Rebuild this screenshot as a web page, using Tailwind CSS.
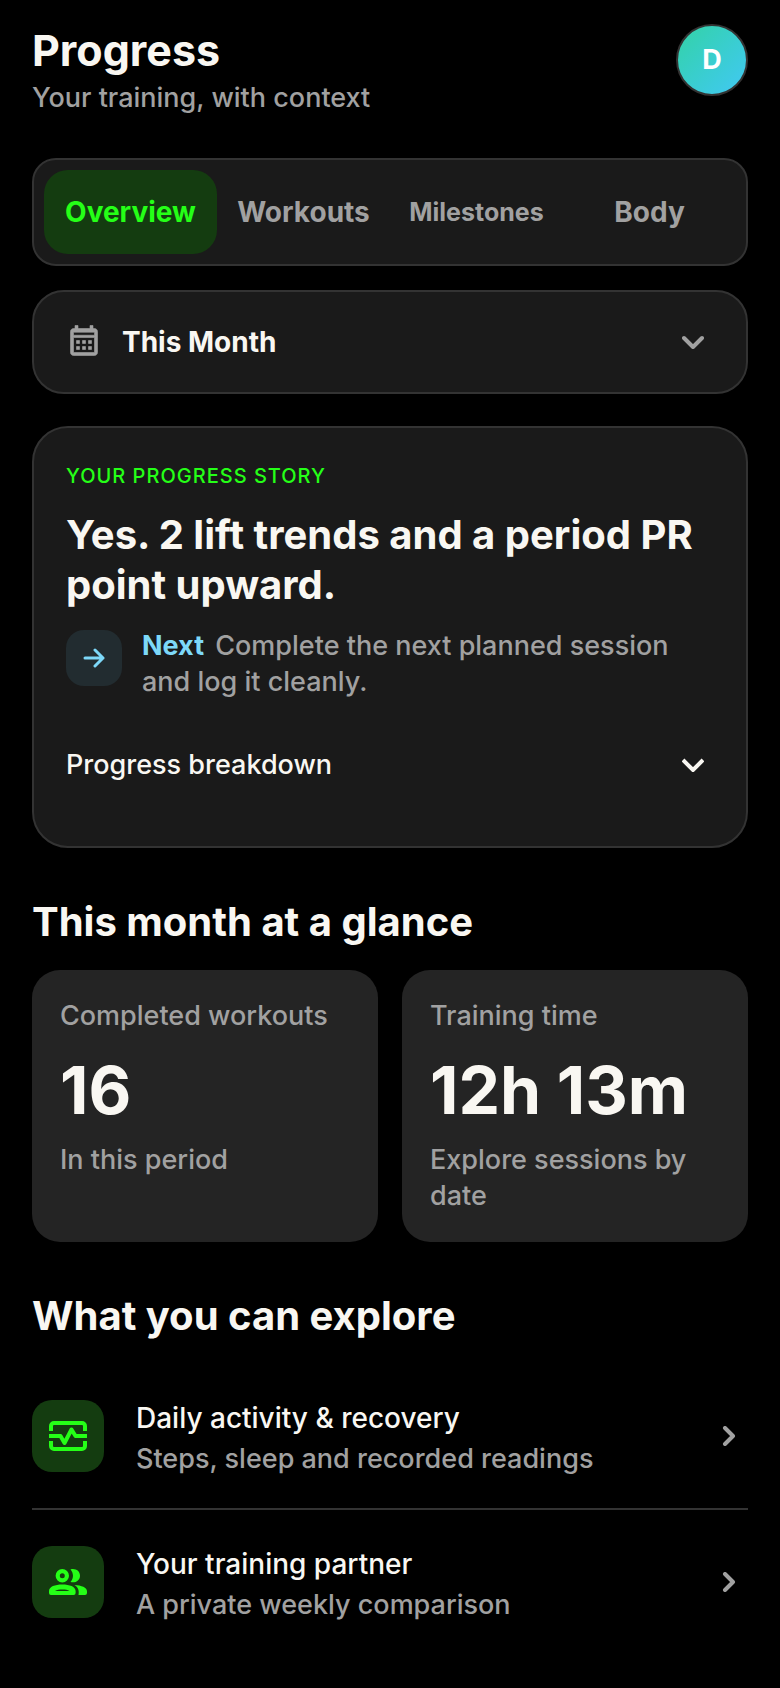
<!DOCTYPE html>
<html lang="en">
<head>
<meta charset="UTF-8">
<title>Progress</title>
<meta name="viewport" content="width=device-width,initial-scale=1">
<script src="https://cdn.jsdelivr.net/npm/@tailwindcss/browser@4"></script>
</head>

<body class="bg-black text-[#f9f7f2] font-['Inter',sans-serif] text-[27px] leading-9 font-medium">
<main class="px-8 pt-6 pb-8">

  <!-- header -->
  <header class="flex items-start justify-between mb-[42px]">
    <div>
      <h1 class="text-[43px] leading-[52px] font-bold mb-1">Progress</h1>
      <p class="text-[#a1a1a1]">Your training, with context</p>
    </div>
    <button class="size-[72px] rounded-full border-2 border-[#333] bg-linear-135 from-[#34d2a5] to-[#42c8f4] text-white font-bold" aria-label="Account">D</button>
  </header>

  <!-- tabs -->
  <nav class="grid grid-cols-4 p-2.5 mb-6 rounded-3xl border-2 border-[#333] bg-[#1a1a1a] text-[28px] font-bold text-[#a1a1a1]">
    <button class="h-[84px] rounded-3xl bg-[#143c10] text-[#25ff17]">Overview</button>
    <button class="h-[84px] rounded-3xl">Workouts</button>
    <button class="h-[84px] rounded-3xl text-[25px]">Milestones</button>
    <button class="h-[84px] rounded-3xl">Body</button>
  </nav>

  <!-- period -->
  <div class="relative mb-8">
    <svg class="absolute left-[34px] top-[34px] size-9 fill-[#a1a1a1] pointer-events-none" viewBox="0 0 24 24" stroke="#a1a1a1" stroke-width=".4"><path d="M7 11H9V13H7V11M21 5V19C21 20.11 20.11 21 19 21H5C3.89 21 3 20.1 3 19V5C3 3.9 3.9 3 5 3H6V1H8V3H16V1H18V3H19C20.11 3 21 3.9 21 5M5 7.500H19V5.500H5V7.500M19 19V9H5V19H19M15 13V11H17V13H15M11 13V11H13V13H11M7 15H9V17H7V15M15 17V15H17V17H15M11 17V15H13V17H11Z"/></svg>
    <select aria-label="Period" class="appearance-none w-full h-[104px] pl-[88px] pr-20 rounded-[32px] border-2 border-[#333] bg-[#1a1a1a] text-[28px] font-bold">
      <option>This Month</option>
    </select>
    <svg class="absolute right-11 top-[45px] w-[22px] h-[14px] pointer-events-none" viewBox="0 0 22 14" fill="none" stroke="#a1a1a1" stroke-width="4" stroke-linecap="round" stroke-linejoin="round"><path d="M2 3L11 12L20 3"/></svg>
  </div>

  <!-- story -->
  <section class="px-8 pt-[34px] pb-9 mb-[50px] rounded-[36px] border-2 border-[#333] bg-[#1a1a1a]">
    <p class="text-xl leading-7 tracking-wider text-[#25ff17] mb-5">YOUR PROGRESS STORY</p>
    <h2 class="text-[40px] leading-[50px] font-bold mb-[18px]">Yes. 2 lift trends and a period PR point upward.</h2>
    <div class="flex items-start gap-5 mb-5">
      <div class="grid place-items-center size-14 mt-0.5 shrink-0 rounded-[18px] bg-[#222c30]">
        <svg class="w-[22px] h-[20px]" viewBox="0 0 22 20" fill="none" stroke="#7dd8f8" stroke-width="3" stroke-linecap="round" stroke-linejoin="round"><path d="M2 10H20M12 2L20 10L12 18"/></svg>
      </div>
      <p class="text-[#a1a1a1]"><b class="text-[#7dd8f8] mr-1">Next</b> Complete the next planned session and log it cleanly.</p>
    </div>
    <button class="flex items-center justify-between w-full h-[90px] pr-2.5">
      Progress breakdown
      <svg class="w-[22px] h-[14px]" viewBox="0 0 22 14" fill="none" stroke="#f9f7f2" stroke-width="4"><path d="M1 2L11 12L21 2"/></svg>
    </button>
  </section>

  <!-- glance -->
  <section class="mb-[50px]">
    <h2 class="text-[40px] leading-[48px] font-bold mb-6">This month at a glance</h2>
    <div class="grid grid-cols-2 gap-6">
      <div class="p-7 rounded-[28px] bg-[#242424]">
        <p class="text-[#a1a1a1] mb-4">Completed workouts</p>
        <p class="text-[66px] leading-[80px] font-bold mb-3">16</p>
        <p class="text-[#a1a1a1]">In this period</p>
      </div>
      <div class="p-7 rounded-[28px] bg-[#242424]">
        <p class="text-[#a1a1a1] mb-4">Training time</p>
        <p class="text-[66px] leading-[80px] font-bold mb-3 whitespace-nowrap">12h 13m</p>
        <p class="text-[#a1a1a1]">Explore sessions by date</p>
      </div>
    </div>
  </section>

  <!-- explore -->
  <section>
    <h2 class="text-[40px] leading-[48px] font-bold mb-6">What you can explore</h2>
    <a href="#" class="flex items-center gap-8 h-[146px] pr-3 border-b-2 border-[#333]">
      <span class="grid place-items-center size-[72px] rounded-[20px] bg-[#143c10]">
        <svg class="w-[38px] h-[30px]" viewBox="0 0 38 30" fill="none" stroke="#25ff17" stroke-width="4"><path d="M2 10V5a3 3 0 0 1 3-3h28a3 3 0 0 1 3 3v5M2 20v5a3 3 0 0 0 3 3h28a3 3 0 0 0 3-3v-5"/><path stroke-linejoin="round" d="M0 15H11.500L15.500 22L22.500 8.500L26.500 15H38"/></svg>
      </span>
      <span class="flex-1 flex flex-col gap-1 pt-1">
        <span class="text-[28px] leading-[38px]">Daily activity &amp; recovery</span>
        <span class="text-[#a1a1a1]">Steps, sleep and recorded readings</span>
      </span>
      <svg class="w-[14px] h-5" viewBox="0 0 14 20" fill="none" stroke="#a1a1a1" stroke-width="4" stroke-linecap="round" stroke-linejoin="round"><path d="M3 2L11 10L3 18"/></svg>
    </a>
    <a href="#" class="flex items-center gap-8 h-[144px] pr-3">
      <span class="grid place-items-center size-[72px] rounded-[20px] bg-[#143c10]">
        <svg class="w-[38px] h-[26px]" viewBox="0 0 38 26" fill="#25ff17"><path fill-rule="evenodd" d="M13.300 0a6.700 6.700 0 1 1 0 13.400a6.700 6.700 0 1 1 0-13.400zM13.300 4.200a2.500 2.500 0 1 0 0 5a2.500 2.500 0 1 0 0-5z"/><path d="M21.500 .400C26.500-1 31 2 31 6.700S26.500 14.400 21.500 13C24.800 9 24.800 4.400 21.500 .400z"/><path fill-rule="evenodd" d="M0 22C0 17.500 6 15.400 13.300 15.400S26.600 17.500 26.600 22V24a2 2 0 0 1-2 2H2a2 2 0 0 1-2-2zM6 22H20.500C18.500 20.800 16.500 20.400 13.300 20.400S8 20.800 6 22z"/><path d="M25.500 16C32.500 16.300 38 18.500 38 22.500V24a2 2 0 0 1-2 2H29.500C30.300 22 29.500 18.500 25.500 16z"/></svg>
      </span>
      <span class="flex-1 flex flex-col gap-1 pt-1">
        <span class="text-[28px] leading-[38px]">Your training partner</span>
        <span class="text-[#a1a1a1]">A private weekly comparison</span>
      </span>
      <svg class="w-[14px] h-5" viewBox="0 0 14 20" fill="none" stroke="#a1a1a1" stroke-width="4" stroke-linecap="round" stroke-linejoin="round"><path d="M3 2L11 10L3 18"/></svg>
    </a>
  </section>

</main>
</body>
</html>
